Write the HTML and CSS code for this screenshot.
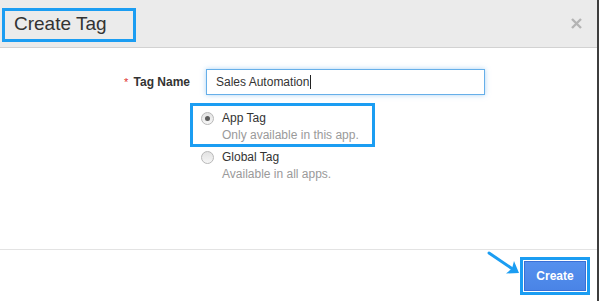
FILE: index.html
```html
<!DOCTYPE html>
<html>
<head>
<meta charset="utf-8">
<link rel="stylesheet" href="styles.css">
</head>
<body>
<div class="modal">
  <div class="header">
    <h4 class="title">Create Tag</h4>
    <button class="close" aria-label="Close">
      <svg width="11" height="11" viewBox="0 0 11 11"><path d="M1 1 L10 10 M10 1 L1 10" stroke="#b4b4b4" stroke-width="2.4" stroke-linecap="butt"/></svg>
    </button>
  </div>
  <div class="body">
    <div class="row">
      <label class="label"><span class="req">*</span> Tag Name</label>
      <div class="input"><span class="val">Sales Automation</span><span class="caret"></span></div>
    </div>
    <div class="radios">
      <div class="hl">
        <div class="opt">
          <span class="radio checked"></span>
          <div class="opt-text">
            <div class="opt-title">App Tag</div>
            <div class="opt-desc">Only available in this app.</div>
          </div>
        </div>
      </div>
      <div class="opt plain">
        <span class="radio"></span>
        <div class="opt-text">
          <div class="opt-title">Global Tag</div>
          <div class="opt-desc">Available in all apps.</div>
        </div>
      </div>
    </div>
  </div>
  <div class="footer">
    <svg class="arrow" width="40" height="30" viewBox="0 0 40 30">
      <path d="M4 2 L29 19" stroke="#1b9df2" stroke-width="3" stroke-linecap="round" fill="none"/>
      <path d="M34 22 L21 22.5 L27 17.5 L29 10 Z" fill="#1b9df2"/>
    </svg>
    <div class="btn-hl"><button class="btn">Create</button></div>
  </div>
</div>
</body>
</html>
```
FILE: styles.css
```css
html, body {
  margin: 0;
  padding: 0;
  background: #fff;
}
body {
  font-family: "Liberation Sans", Arial, sans-serif;
  color: #333;
}
.modal {
  width: 597px;
  height: 301px;
  border-right: 2px solid #3e3e3e;
  display: flex;
  flex-direction: column;
  background: #fff;
}
.header {
  height: 47px;
  background: #ebebeb;
  border-bottom: 1px solid #d2d2d2;
  display: flex;
  align-items: flex-start;
  flex-shrink: 0;
}
.title {
  margin: 8px 0 0 2px;
  box-sizing: border-box;
  width: 134px;
  height: 34px;
  border: 3px solid #1b9df2;
  padding: 2px 0 4px 9px;
  font-size: 19px;
  font-weight: normal;
  line-height: 22px;
  color: #333;
}
.close {
  margin: 18px 15px 0 auto;
  padding: 0;
  border: 0;
  background: none;
  width: 11px;
  height: 11px;
  display: block;
}
.close svg { display: block; }
.body {
  flex: 1;
  padding-top: 21px;
}
.row {
  display: flex;
  align-items: center;
}
.label {
  width: 190px;
  text-align: right;
  font-size: 12px;
  font-weight: bold;
  color: #333;
  margin-right: 16px;
}
.req {
  color: #e0322e;
  font-weight: normal;
  font-size: 11px;
  margin-right: 2px;
}
.input {
  box-sizing: border-box;
  width: 279px;
  height: 26px;
  border: 1px solid #66afe9;
  box-shadow: 0 0 5px rgba(102, 175, 233, 0.55);
  padding-left: 9px;
  display: flex;
  align-items: center;
  font-size: 12px;
  color: #333;
}
.caret {
  display: inline-block;
  width: 1px;
  height: 14px;
  background: #222;
  margin-left: 1px;
}
.radios {
  margin: 8px 0 0 190px;
}
.hl {
  box-sizing: border-box;
  width: 185px;
  border: 3px solid #1b9df2;
  padding: 4px 0 0 8px;
}
.opt {
  display: flex;
  align-items: flex-start;
  font-size: 12px;
}
.opt.plain {
  margin-top: 2px;
  padding-left: 11px;
}
.radio {
  box-sizing: border-box;
  width: 13px;
  height: 13px;
  border-radius: 50%;
  border: 1px solid #b8b8b8;
  background: linear-gradient(#e2e2e2, #f6f6f6);
  margin: 2px 8px 0 0;
  display: flex;
  align-items: center;
  justify-content: center;
  flex-shrink: 0;
}
.radio.checked::after {
  content: "";
  width: 5px;
  height: 5px;
  border-radius: 50%;
  background: #5c5c5c;
}
.opt-title {
  line-height: 17px;
  color: #333;
}
.opt-desc {
  line-height: 17px;
  color: #9a9a9a;
}
.footer {
  position: relative;
  height: 52px;
  border-top: 1px solid #e3e3e3;
  flex-shrink: 0;
  display: flex;
  justify-content: flex-end;
  align-items: flex-start;
  padding: 7px 7px 0 0;
  box-sizing: border-box;
}
.arrow {
  position: absolute;
  left: 485px;
  top: 1px;
}
.btn-hl {
  border: 3px solid #1b9df2;
  padding: 1px;
  background: #fff;
}
.btn {
  display: block;
  box-sizing: border-box;
  width: 62px;
  height: 30px;
  border: 1px solid #3a6fd6;
  background: linear-gradient(#5590ee, #4a84e6);
  color: #fff;
  font-family: "Liberation Sans", Arial, sans-serif;
  font-size: 12px;
  font-weight: bold;
  padding: 0;
}
```
